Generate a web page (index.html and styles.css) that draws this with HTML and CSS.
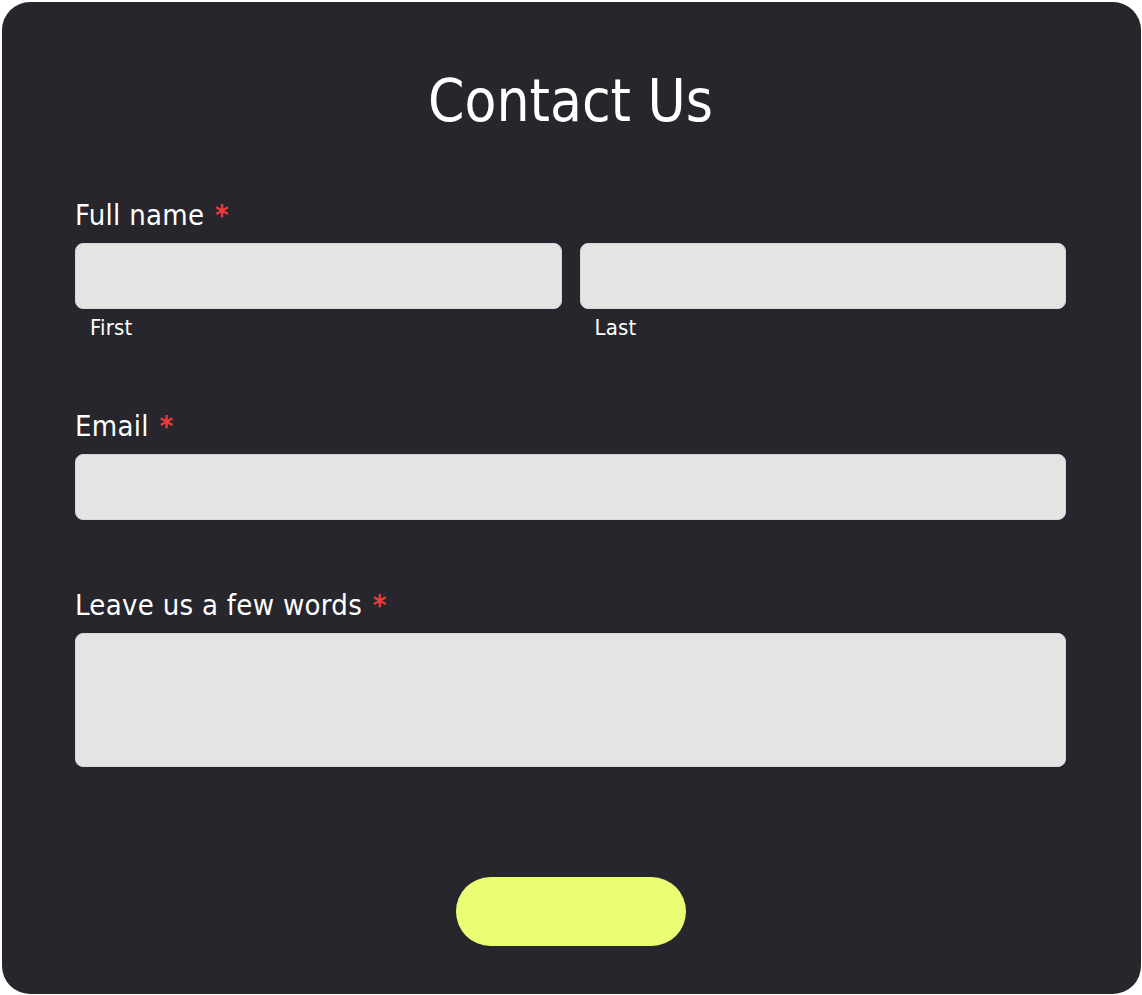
FILE: index.html
```html
<!DOCTYPE html>
<html lang="en">
<head>
<meta charset="utf-8">
<title>Contact Us</title>
<link rel="stylesheet" href="styles.css">
</head>
<body>
  <main class="card">
    <h1 class="title">Contact Us</h1>
    <form class="form" onsubmit="return false">
      <div class="field field-name">
        <label class="label">Full name <span class="req">*</span></label>
        <div class="name-row">
          <div class="name-part">
            <input class="input" type="text" aria-label="First name">
            <span class="sublabel">First</span>
          </div>
          <div class="name-part">
            <input class="input" type="text" aria-label="Last name">
            <span class="sublabel">Last</span>
          </div>
        </div>
      </div>
      <div class="field">
        <label class="label">Email <span class="req">*</span></label>
        <input class="input" type="email" aria-label="Email">
      </div>
      <div class="field">
        <label class="label">Leave us a few words <span class="req">*</span></label>
        <textarea class="input textarea" aria-label="Message"></textarea>
      </div>
      <div class="actions">
        <button class="submit" type="submit"></button>
      </div>
    </form>
  </main>
</body>
</html>
```
FILE: styles.css
```css
* {
  box-sizing: border-box;
}

html, body {
  margin: 0;
  background: #ffffff;
}

body {
  padding: 2px 1px 1px 2px;
  font-family: "DejaVu Sans Condensed", "DejaVu Sans", sans-serif;
  color: #ffffff;
}

.card {
  background: #27262c;
  border-radius: 28px;
  height: 992px;
  padding: 64px 75px 48px 73px;
  display: flex;
  flex-direction: column;
}

.title {
  margin: 0;
  font-size: 58px;
  line-height: 70px;
  font-weight: normal;
  text-align: center;
}

.form {
  margin-top: 61px;
  display: flex;
  flex-direction: column;
}

.field {
  display: flex;
  flex-direction: column;
  gap: 10px;
}

.field + .field {
  margin-top: 67px;
}

.label {
  font-size: 29px;
  line-height: 36px;
  letter-spacing: 0.3px;
}

.req {
  color: #ee3b3b;
  font-weight: bold;
  margin-left: 2px;
}

.name-row {
  display: flex;
  gap: 18px;
}

.name-part {
  flex: 1;
  display: flex;
  flex-direction: column;
}

.sublabel {
  margin-top: 6px;
  padding-left: 15px;
  font-size: 22px;
  line-height: 26px;
  letter-spacing: 0.2px;
}

.input {
  display: block;
  width: 100%;
  height: 66px;
  margin: 0;
  background: #e4e4e4;
  border: 1px solid #d6d6d6;
  border-radius: 8px;
  font: inherit;
  outline: none;
}

.textarea {
  height: 134px;
  resize: none;
}

.actions {
  margin-top: 110px;
  display: flex;
  justify-content: center;
}

.submit {
  width: 230px;
  height: 69px;
  border: none;
  border-radius: 35px;
  background: #ebfd73;
  cursor: pointer;
}
```
